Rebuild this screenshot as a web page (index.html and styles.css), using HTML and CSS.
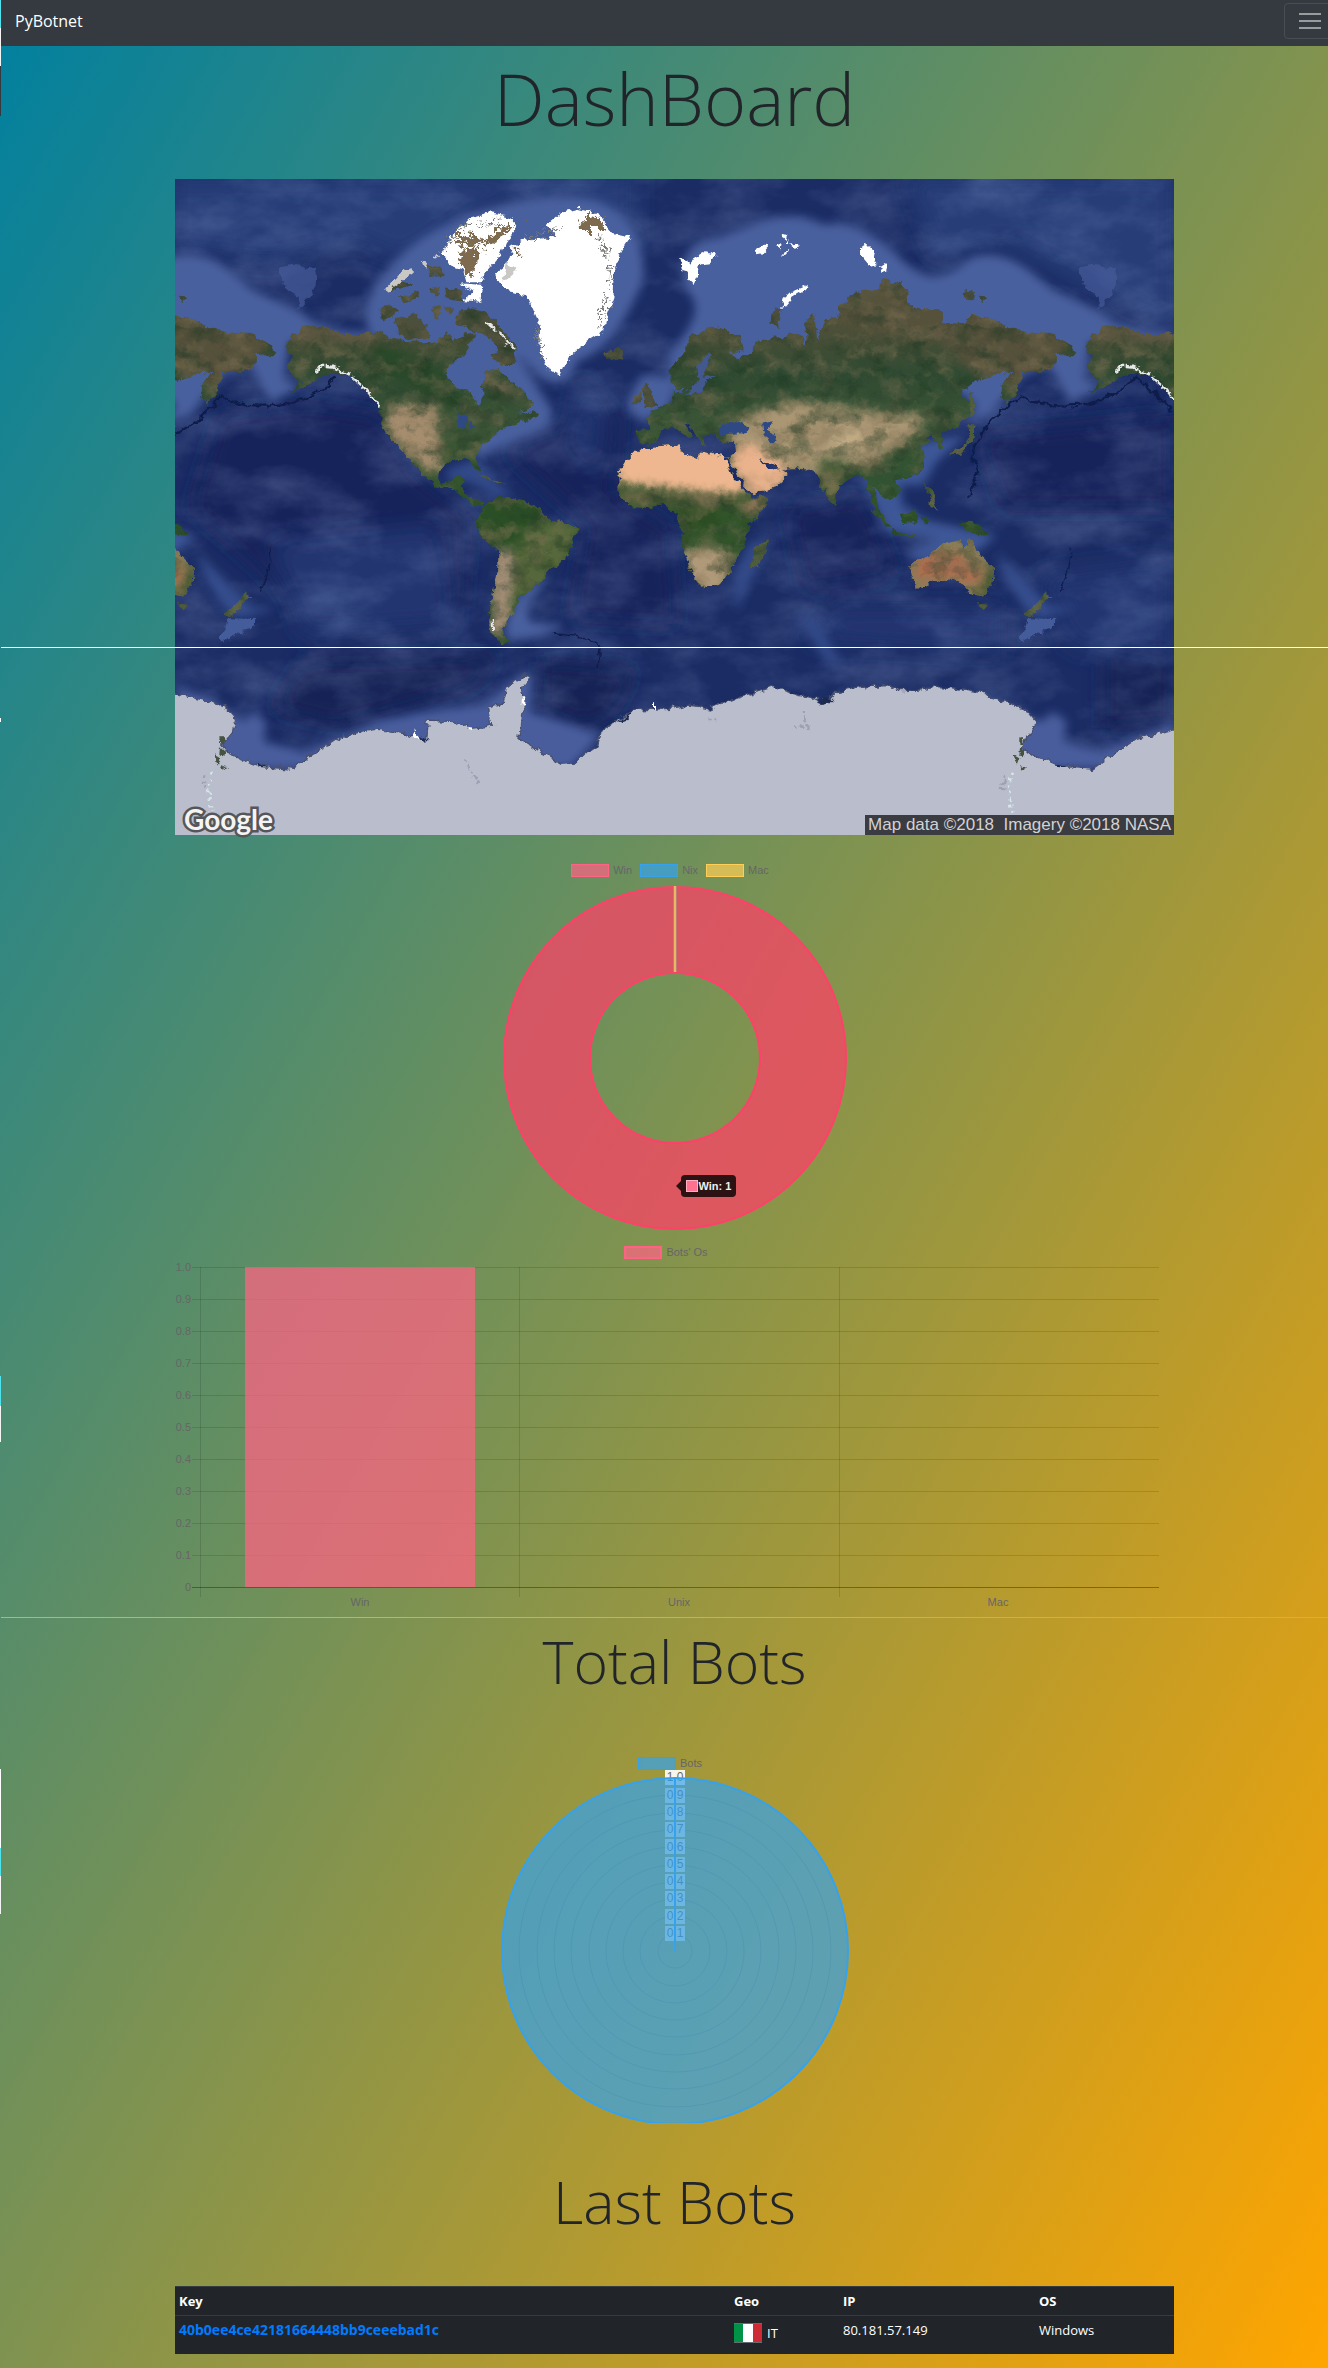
FILE: index.html
```html
<!DOCTYPE html>
<html lang="en">
<head>
<meta charset="utf-8">
<meta name="viewport" content="width=device-width, initial-scale=1">
<title>PyBotnet</title>
<link rel="stylesheet" href="styles.css">
</head>
<body>
<nav class="navbar">
  <a class="brand" href="#">PyBotnet</a>
  <button class="toggler" type="button" aria-label="Toggle navigation"><span></span><span></span><span></span></button>
</nav>
<main>
  <h1 class="title">DashBoard</h1>

  <section class="map-row">
    <div class="map">
      <svg class="map-art" viewBox="15 12 2997 1968" preserveAspectRatio="none" role="img" aria-label="World map">
        <defs>
          <filter id="soft" x="-10%" y="-10%" width="120%" height="120%"><feGaussianBlur stdDeviation="14"/></filter>
          <filter id="softer" x="-20%" y="-20%" width="140%" height="140%"><feGaussianBlur stdDeviation="34"/></filter>
          <filter id="coast" x="-2%" y="-2%" width="104%" height="104%">
            <feTurbulence type="fractalNoise" baseFrequency="0.04" numOctaves="4" seed="4" result="n"/>
            <feDisplacementMap in="SourceGraphic" in2="n" scale="26" xChannelSelector="R" yChannelSelector="G" result="d"/>
            <feGaussianBlur in="d" stdDeviation="1"/>
          </filter>
          <filter id="snow" x="-5%" y="-5%" width="110%" height="110%">
            <feTurbulence type="fractalNoise" baseFrequency="0.06" numOctaves="3" seed="12" result="n"/>
            <feDisplacementMap in="SourceGraphic" in2="n" scale="60" xChannelSelector="R" yChannelSelector="G"/>
          </filter>
          <filter id="grain" x="0" y="0" width="100%" height="100%">
            <feTurbulence type="fractalNoise" baseFrequency="0.005 0.009" numOctaves="6" seed="9"/>
            <feColorMatrix values="0 0 0 0 .28  0 0 0 0 .38  0 0 0 0 .66  1.3 0 0 0 -.5"/>
          </filter>
          <filter id="rock" x="0" y="0" width="100%" height="100%" color-interpolation-filters="sRGB">
            <feTurbulence type="fractalNoise" baseFrequency="0.014 0.02" numOctaves="5" seed="21" result="n"/>
            <feColorMatrix in="n" values="0 0 0 0 .5  0 0 0 0 .44  0 0 0 0 .33  1.5 0 0 0 -.68" result="c"/>
            <feColorMatrix in="n" values="0 0 0 0 .12  0 0 0 0 .22  0 0 0 0 .14  0 1.5 0 0 -.68" result="k"/>
            <feComposite in="c" in2="SourceGraphic" operator="in" result="t"/>
            <feComposite in="k" in2="SourceGraphic" operator="in" result="u"/>
            <feMerge><feMergeNode in="SourceGraphic"/><feMergeNode in="t"/><feMergeNode in="u"/></feMerge>
          </filter>
          <linearGradient id="land" x1="0" y1="330" x2="0" y2="1420" gradientUnits="userSpaceOnUse">
            <stop offset="0" stop-color="#5c5640"/><stop offset=".12" stop-color="#4e5038"/>
            <stop offset=".25" stop-color="#2f4b32"/><stop offset=".4" stop-color="#3d5637"/>
            <stop offset=".62" stop-color="#2f5228"/><stop offset=".78" stop-color="#5d6742"/>
            <stop offset="1" stop-color="#726d50"/>
          </linearGradient>
          <path id="namerica" d="M350 500L400 455 450 452 520 475 560 482 620 470 680 492 740 500 800 504 830 470 850 500 880 480 915 470 900 510 870 550 835 580 830 605 860 640 900 650 925 692 940 680 935 640 945 590 990 580 1010 610 1050 640 1085 680 1080 700 1050 712 1100 715 1090 732 1040 745 1000 765 960 790 940 815 915 850 932 885 920 888 900 857 860 855 830 865 810 880 800 910 820 925 850 920 862 905 882 910 875 937 890 960 915 975 945 978 930 992 910 990 880 965 840 940 790 930 755 900 720 850 690 820 650 780 632 740 632 700 590 650 550 605 500 590 450 610 400 640 350 655 400 622 360 600 350 570 372 545 350 530Z"/>
          <path id="samerica" d="M940 990L990 965 1060 975 1110 1000 1140 1035 1190 1045 1226 1062 1215 1085 1195 1130 1185 1155 1145 1180 1110 1220 1090 1245 1045 1270 1030 1310 1005 1340 1000 1375 1022 1407 990 1405 962 1375 955 1320 972 1250 985 1180 985 1130 950 1100 920 1060 930 1010Z"/>
          <path id="eurasia" d="M1502 625L1500 590 1540 530 1560 490 1600 462 1650 455 1700 480 1722 510 1720 532 1685 527 1700 552 1745 530 1760 500 1810 490 1885 475 1912 510 1905 450 1930 410 1942 490 1960 430 2000 430 2010 390 2060 350 2120 340 2140 315 2205 332 2215 350 2215 395 2280 405 2312 405 2325 445 2390 440 2405 420 2460 430 2520 460 2570 478 2640 470 2680 500 2722 530 2700 547 2660 535 2655 570 2610 597 2560 590 2542 640 2510 690 2493 660 2500 615 2530 590 2440 605 2390 640 2370 655 2402 695 2390 730 2350 760 2310 775 2325 820 2308 828 2290 780 2268 785 2282 800 2250 812 2265 850 2255 890 2220 910 2175 915 2190 945 2165 978 2140 965 2108 930 2122 990 2152 1045 2130 1030 2098 960 2080 900 2050 905 2010 930 1992 990 1970 970 1940 900 1920 885 1880 880 1830 880 1790 860 1770 848 1800 885 1835 878 1856 900 1820 935 1745 955 1700 900 1672 850 1698 830 1695 802 1650 798 1640 780 1600 785 1608 812 1590 805 1560 750 1540 742 1570 782 1555 795 1530 770 1505 750 1470 765 1460 795 1440 808 1405 803 1396 765 1445 762 1430 728 1460 700 1500 685 1512 650 1530 655 1545 635 1525 645Z"/>
          <path id="africa" d="M1345 900L1370 860 1410 820 1450 815 1530 808 1532 830 1580 852 1600 835 1665 848 1690 905 1740 965 1798 965 1780 1000 1740 1050 1728 1085 1722 1118 1700 1150 1690 1180 1650 1230 1590 1242 1570 1200 1550 1150 1535 1110 1545 1080 1520 1020 1480 990 1440 1000 1390 997 1345 960Z"/>
          <path id="australia" d="M2220 1165L2270 1145 2310 1110 2370 1095 2380 1125 2400 1090 2430 1140 2475 1180 2470 1225 2440 1265 2400 1257 2370 1222 2310 1212 2240 1240 2225 1200Z"/>
          <clipPath id="in-na"><use href="#namerica"/></clipPath>
          <clipPath id="in-sa"><use href="#samerica"/></clipPath>
          <clipPath id="in-ea"><use href="#eurasia"/></clipPath>
          <clipPath id="in-af"><use href="#africa"/></clipPath>
          <clipPath id="in-au"><use href="#australia"/></clipPath>
          <g id="shelf">
            <path fill="#4a609f" filter="url(#soft)" d="M600 480C560 380 640 280 740 200C880 100 1100 50 1250 70C1400 100 1440 240 1410 340C1370 420 1330 520 1220 560C1160 700 1080 560 1040 540L1150 710 1130 760 960 830 930 850 700 560Z"/>
            <path fill="#4a609f" filter="url(#soft)" d="M1500 540C1560 460 1600 400 1560 360C1520 300 1540 190 1640 190C1740 150 1860 90 1960 150C2060 130 2140 200 2200 260C2280 340 2340 300 2400 250C2480 220 2560 260 2640 340C2720 380 2760 390 2830 440C2920 480 2980 470 3012 470L2990 500 2760 500 2740 610 2790 640 2700 680 2640 570 2560 600 2460 720 2390 740 2420 690 2370 655 1500 660Z"/>
            <path fill="#4a609f" filter="url(#soft)" d="M1380 660L1420 600 1520 610 1500 700 1420 740 1370 700Z"/>
            <path fill="#3e5797" filter="url(#soft)" d="M2250 800L2320 790 2390 780 2300 860 2260 930 2190 930 2200 1000 2280 1040 2480 1080 2420 1130 2260 1160 2200 1140 2300 1090 2150 1070 2080 920Z"/>
            <path fill="#4a609f" filter="url(#soft)" d="M1060 1245L1140 1190 1070 1290 1080 1340 1190 1355 1100 1385 1010 1395 1010 1330Z"/>
            <path fill="#344d8d" filter="url(#soft)" d="M2480 1130L2550 1200 2640 1295 2720 1295 2620 1330 2570 1310 2510 1220Z"/>
            <path fill="#455c9b" filter="url(#coast)" d="M2575 1330L2665 1332 2640 1365 2600 1375 2560 1405 2552 1395Z"/>
            <path fill="#314a88" filter="url(#soft)" d="M830 885L920 850 990 930 1030 960 980 970 900 920 830 920ZM1690 1200L1740 1100 1800 1090 1760 1180 1700 1310ZM1880 1320L1940 1330 2020 1480 1960 1450Z"/>
            <path fill="#455a99" filter="url(#coast)" d="M2730 280Q2780 260 2800 280Q2850 270 2835 330Q2815 380 2785 405Q2790 350 2730 320Z" opacity=".7"/>
          </g>
          <g id="whites" fill="#fff">
            <path d="M1060 195L1120 190 1160 178 1130 150 1180 110 1225 98 1280 112 1300 140 1330 175 1382 185 1352 230 1335 285 1330 370 1305 435 1300 470 1250 500 1200 540 1180 575 1170 604 1135 585 1108 530 1110 450 1088 400 1070 357 1000 347 975 295 1015 265 1025 215Z"/>
            <path d="M815 235L850 180 900 130 960 115 1020 125 1045 155 1010 195 990 245 950 290 930 322 890 322 880 285 850 275ZM870 325L940 330 930 380 880 375 910 352ZM1530 250L1545 255 1555 275 1575 245 1600 228 1640 240 1620 262 1590 265 1585 300 1570 330 1555 315 1560 290 1540 285ZM1830 402L1838 375 1865 350 1912 330 1905 345 1870 365 1845 395ZM2070 220L2090 205 2108 225 2105 245 2122 270 2105 275 2070 235ZM2130 275L2145 265 2158 285 2135 292Z"/>
            <path d="M1760 222L1780 212 1797 214 1780 232 1765 235ZM1815 212L1838 204 1835 220ZM1840 188L1855 178 1850 198ZM1862 212L1890 208 1875 222ZM1832 236L1858 224 1850 236ZM1845 205L1862 196 1858 212Z"/>
            <path d="M1010 265L1040 290 1000 320ZM640 350L700 285 725 280 725 298 660 345ZM795 235L805 250 790 245ZM755 262L772 258 765 290Z" fill="#c9c8c4"/>
          </g>
          <g id="world">
            <g filter="url(#coast)">
              <g filter="url(#rock)">
              <g fill="#4b4f3a">
                <path d="M860 405L900 400 940 410 980 440 1010 480 1040 520 1030 570 990 570 960 545 985 520 950 480 900 465 860 445ZM675 430L740 420 772 450 780 485 720 492 680 470ZM625 400L660 388 690 410 640 442ZM645 345L690 318 730 330 690 345ZM690 365L745 350 750 370 700 382ZM765 265L800 275 825 300 780 303ZM775 340L810 335 800 362ZM825 340L880 350 878 380 830 372ZM790 395L808 395 805 435 790 425ZM820 395L850 400 840 420Z"/>
                <path d="M1305 530L1350 518 1363 545 1330 562 1312 548ZM1415 640L1435 617 1442 660 1467 690 1425 700ZM1393 660L1412 652 1410 685 1390 688ZM1800 445L1815 400 1832 402 1825 455ZM2375 355L2410 345 2415 370 2385 378ZM2430 365L2455 368 2435 378Z"/>
                <path d="M2340 835L2385 812 2398 780 2395 750 2420 752 2412 795 2370 840ZM2400 650L2412 655 2408 725 2398 725ZM2265 920L2285 950 2300 1005 2285 1000ZM1745 1175L1752 1122 1792 1092 1775 1165 1760 1180ZM2420 1278L2452 1285 2440 1305ZM2628 1248L2645 1265 2612 1292 2580 1327 2563 1320 2600 1285ZM1085 712L1105 715 1100 728 1078 725ZM920 895L990 920 1005 928 960 915Z" fill="#4f5d3c"/>
                <path d="M2365 1042L2420 1045 2465 1082 2430 1078 2385 1065ZM2185 1018L2243 1002 2240 1042 2200 1050ZM2105 1000L2165 1062 2145 1055ZM2165 1068L2230 1080 2225 1086 2165 1075ZM2255 1025L2280 1030 2262 1055Z" fill="#2d5128"/>
              </g>
              <use href="#namerica" fill="url(#land)"/><use href="#samerica" fill="#2c5026"/><use href="#eurasia" fill="url(#land)"/><use href="#africa" fill="#32542c"/><use href="#australia" fill="#8a7c56"/>
              <g clip-path="url(#in-na)"><g filter="url(#soft)">
                <path fill="#a58d6e" d="M640 720L700 680 800 690 810 780 815 900 760 880 660 790Z"/>
                <path fill="#5f5943" d="M350 455H620V500H360ZM870 560H960V620H1000L1080 690 960 640Z"/>
                <path fill="#2c4a2c" d="M620 500L780 560 900 680 840 700 690 620 600 600Z"/>
              </g></g>
              <g clip-path="url(#in-sa)"><g filter="url(#soft)">
                <path fill="#57673b" d="M1090 1040L1230 1040 1190 1160 1090 1260 1020 1260 1030 1140Z"/>
                <path fill="#a8917a" d="M970 1120L1025 1120 1030 1190 1020 1330 990 1400 960 1380Z"/>
              </g></g>
              <g clip-path="url(#in-ea)"><g filter="url(#soft)">
                <path fill="#55513b" d="M2000 420L2200 330 2700 480 2650 600 2520 640 2400 590 2300 480 2100 470Z"/>
                <path fill="#aa9673" d="M1650 790L1740 720 1850 680 1980 690 2100 710 2260 720 2240 780 2150 830 2100 870 1960 850 1930 900 1800 870Z"/>
                <path fill="#c9b38b" d="M1970 790L2040 770 2090 780 2050 805 1990 810Z"/>
                <path fill="#eab38d" d="M1680 850L1740 810 1860 890 1820 940 1740 960Z"/>
                <path fill="#76704e" d="M1930 880L2010 890 2010 960 1980 980Z"/>
                <path fill="#335333" d="M2060 880L2250 800 2260 900 2170 970 2100 940Z"/>
              </g></g>
              <g clip-path="url(#in-af)"><g filter="url(#soft)">
                <path fill="#626440" d="M1340 950L1500 955 1700 950 1710 985 1340 990Z"/>
                <path fill="#a37c5e" d="M1700 1000L1800 950 1770 1020Z"/>
                <path fill="#b09978" d="M1520 1120L1640 1120 1700 1150 1650 1260 1560 1240Z"/>
                <path fill="#2a4d24" d="M1520 1005L1650 1000 1640 1050 1540 1060Z"/>
              </g></g>
              <g clip-path="url(#in-au)"><g filter="url(#soft)">
                <path fill="#b06d50" d="M2235 1150L2320 1135 2380 1140 2400 1180 2430 1180 2420 1230 2340 1205 2240 1215Z"/>
                <path fill="#42562f" d="M2455 1160L2490 1170 2480 1260 2420 1270Z"/>
              </g></g>
              </g>
              <g clip-path="url(#in-af)"><path filter="url(#soft)" fill="#efb78f" d="M1330 920L1360 780 1700 780 1730 955 1600 950 1480 938Z"/></g>
              <g clip-path="url(#in-ea)"><path filter="url(#soft)" fill="#eab38d" opacity=".8" d="M1670 840L1720 805 1860 890 1820 945 1740 970Z"/></g>
              <path fill="#42598f" d="M1575 580L1600 545 1622 535 1612 570 1600 605 1640 602 1612 615 1600 650 1540 660 1562 640 1590 612Z"/>
              <path fill="#2f4a84" d="M1645 757L1690 737 1735 755 1730 775 1650 777ZM1775 740L1808 733 1800 765 1822 802 1790 802 1780 770ZM865 720L890 722 880 765 870 750ZM895 740L918 750 905 765Z"/>
              <use href="#whites"/>
              <path fill="#7d6b4f" filter="url(#snow)" d="M1225 150L1270 120 1305 150 1290 165 1230 165ZM1030 225L1050 220 1055 240 1030 240ZM940 200L1010 150 1040 150 960 215ZM860 185L900 175 940 200 910 215 870 205ZM860 225L930 220 910 300 890 305Z"/>
              <path fill="none" stroke="#7a7b78" stroke-width="10" stroke-dasharray="8 7" filter="url(#snow)" d="M1065 185L1160 165M1290 180L1320 270 1310 370 1285 450M1100 450L1118 550M820 240L855 180 900 140M920 150L990 140"/>
              <path fill="none" stroke="#e8e8e8" stroke-width="7" stroke-dasharray="40 4" d="M435 598L450 572 490 575 540 600 590 645 630 695M950 440L990 475 1035 525"/>
              <path fill="none" stroke="#e8e8e8" stroke-width="6" d="M968 1330L969 1365"/>
            </g>
          </g>
        </defs>
        <rect x="15" y="12" width="2997" height="1968" fill="#1b2c64"/>
        <g filter="url(#softer)">
          <path fill="#263c78" d="M0 0H1400V200L1000 60 700 260 550 200 300 260 0 220ZM2200 0H3020V470L2500 200 2300 250Z"/>
          <path fill="#14235a" d="M150 720L400 690 620 720 740 900 900 1020 880 1300 400 1300 60 1000ZM1000 820L1350 700 1330 950 1500 1060 1520 1350 1200 1330 1250 1050ZM2420 780L3010 720V1000L2500 1000ZM1850 1000L2080 960 2180 1200 1900 1240Z"/>
          <path fill="#203571" d="M1230 600L1300 700 1280 900 1200 780ZM300 1100L800 1050 850 1350 400 1380ZM2000 1300L2500 1300 2500 1430 1900 1400ZM2600 1200L3010 1150V1450L2700 1420Z"/>
          <path fill="#152454" d="M400 1460L1000 1440 900 1540 500 1650 300 1600ZM1110 1460L1400 1480 1330 1610 1250 1660 1110 1600ZM2800 1460H3010V1640L2800 1660Z"/>
        </g>
        <rect x="15" y="12" width="2997" height="1968" filter="url(#grain)" opacity=".4"/>
        <use href="#shelf"/><use href="#shelf" x="-2400"/>
        <path fill="#485d9d" filter="url(#soft)" d="M15 1535L120 1570 220 1640 250 1610 290 1640 280 1700 400 1730 620 1640 760 1610 940 1590 1060 1490 1090 1500 1080 1610 1180 1640 1290 1680 1200 1780H100ZM2415 1550L2610 1640 2650 1610 2690 1640 2680 1700 2800 1730 3012 1640V1780H2500Z"/>
        <path fill="none" stroke="#101c4b" stroke-width="7" filter="url(#coast)" d="M15 780Q90 740 150 665Q250 710 380 680Q450 655 500 605M2400 960Q2440 890 2405 850Q2420 760 2550 665Q2650 710 2780 680Q2850 655 2900 605L3012 710"/>
        <path fill="none" stroke="#101c4b" stroke-width="4" filter="url(#coast)" d="M300 1120Q310 1160 270 1250M2700 1120Q2710 1160 2670 1250M1150 1375L1260 1390Q1310 1430 1280 1475"/>
        <use href="#world"/><use href="#world" x="-2400"/><use href="#world" x="2400"/>
        <path fill="#babdcb" stroke="#47506f" stroke-width="4" filter="url(#coast)" d="M-20 1550L100 1575 170 1600 200 1635 190 1670 155 1710 180 1740 260 1770 370 1780 440 1730 500 1690 610 1660 700 1675 770 1690 775 1635 850 1640 910 1660 970 1650 955 1600 1000 1580 1010 1540 1060 1500 1082 1505 1055 1540 1060 1600 1050 1690 1120 1735 1170 1765 1220 1760 1280 1715 1290 1670 1340 1635 1400 1605 1500 1600 1560 1590 1620 1602 1700 1570 1810 1535 1870 1555 1930 1570 1965 1588 2000 1550 2090 1535 2150 1532 2190 1547 2250 1545 2310 1535 2360 1540 2430 1550 2500 1580 2570 1605 2600 1640 2570 1690 2555 1715 2590 1740 2660 1770 2770 1780 2840 1730 2900 1690 3060 1655V2020H-20Z"/>
        <g filter="url(#coast)">
          <path fill="#1c2a50" d="M258 1765L300 1778 260 1776ZM750 1680L780 1695 760 1697ZM1340 1640L1390 1610 1370 1635ZM1950 1575L1990 1570 1968 1592ZM2655 1765L2705 1778 2660 1776Z"/>
          <path fill="#45523f" d="M148 1690h14v14h-14zM150 1715l16 10-4 22-14-6zM130 1740l18 10-8 22zM150 1770l22 6-14 8zM2548 1690h14v14h-14zM2550 1715l16 10-4 22-14-6zM2530 1740l18 10-8 22zM2550 1770l22 6-14 8z"/>
          <path fill="none" stroke="#d5e8ec" stroke-width="7" stroke-dasharray="9 11" d="M125 1790L115 1850 125 1910M2525 1790L2515 1850 2528 1915"/>
          <path fill="none" stroke="#9da1b4" stroke-width="8" stroke-dasharray="10 8" d="M105 1800L100 1850M2505 1800L2498 1850M1905 1605L1908 1665M1870 1655H1920M1612 1635H1645M882 1755L925 1825"/>
          <path fill="#fff" d="M730 1660L750 1690 735 1688ZM895 1652L912 1655 905 1668ZM1055 1570h8v15h-8zM1452 1585h6v20h-6z"/>
        </g>
      </svg>
      <span class="map-logo">Google</span>
      <span class="map-credit">Map data ©2018  Imagery ©2018 NASA</span>
    </div>
    <hr class="map-rule">
  </section>

  <section class="chart donut">
    <ul class="legend">
      <li><i class="swatch red"></i>Win</li>
      <li><i class="swatch blue"></i>Nix</li>
      <li><i class="swatch yellow"></i>Mac</li>
    </ul>
    <div class="ring">
      <svg width="346" height="346" viewBox="0 0 346 346">
        <circle cx="173" cy="173" r="128" fill="none" stroke="#ff4066" stroke-opacity=".72" stroke-width="86"/>
        <circle cx="173" cy="173" r="171" fill="none" stroke="#ff4069" stroke-width="2"/>
        <circle cx="173" cy="173" r="85" fill="none" stroke="#ff4069" stroke-width="2"/>
        <path d="M173 1V87" stroke="#c07a72" stroke-width="4"/><path d="M173 1V87" stroke="#eab765" stroke-width="2"/>
      </svg>
      <div class="tooltip"><i></i>Win: 1</div>
    </div>
  </section>

  <section class="chart bars">
    <ul class="legend"><li><i class="swatch red thick"></i>Bots' Os</li></ul>
    <svg class="bar-art" viewBox="0 0 999 348">
      <path class="grid" d="M17 8.500H984M17 40.500H984M17 72.500H984M17 104.500H984M17 136.500H984M17 168.500H984M17 200.500H984M17 232.500H984M17 264.500H984M17 296.500H984M344.500 8V338M664.500 8V338M25.500 328V338"/>
      <path class="grid" d="M25.500 8V328"/>
      <path class="axis" d="M17 328.500H984"/>
      <rect x="70" y="8" width="230" height="320" fill="#ff6384" fill-opacity=".73"/>
      <g class="ticks" text-anchor="end">
        <text x="16" y="12">1.0</text><text x="16" y="44">0.9</text><text x="16" y="76">0.8</text><text x="16" y="108">0.7</text><text x="16" y="140">0.6</text><text x="16" y="172">0.5</text><text x="16" y="204">0.4</text><text x="16" y="236">0.3</text><text x="16" y="268">0.2</text><text x="16" y="300">0.1</text><text x="16" y="332">0</text>
      </g>
      <g class="ticks" text-anchor="middle">
        <text x="185" y="347">Win</text><text x="504" y="347">Unix</text><text x="823" y="347">Mac</text>
      </g>
    </svg>
  </section>
  <hr class="rule">

  <h2 class="title">Total Bots</h2>
  <section class="chart polar">
    <ul class="legend"><li><i class="swatch blue"></i>Bots</li></ul>
    <svg width="348" height="353" viewBox="0 0 348 353">
      <g fill="none" stroke="#000" stroke-opacity=".16">
        <circle cx="174" cy="181" r="17"/><circle cx="174" cy="181" r="35"/><circle cx="174" cy="181" r="52"/><circle cx="174" cy="181" r="69"/><circle cx="174" cy="181" r="86"/><circle cx="174" cy="181" r="104"/><circle cx="174" cy="181" r="121"/><circle cx="174" cy="181" r="138"/><circle cx="174" cy="181" r="156"/>
      </g>
      <path fill="#fff" fill-opacity=".9" d="M164 0h20v15h-20z"/>
      <path fill="#fff" fill-opacity=".75" d="M164 18h20v15h-20zM164 35h20v15h-20zM164 52h20v15h-20zM164 69h20v15h-20zM164 87h20v15h-20zM164 104h20v15h-20zM164 121h20v15h-20zM164 139h20v15h-20zM164 156h20v15h-20z"/>
      <g class="scale" text-anchor="middle">
        <text x="174" y="11">1.0</text><text x="174" y="29">0.9</text><text x="174" y="46">0.8</text><text x="174" y="63">0.7</text><text x="174" y="81">0.6</text><text x="174" y="98">0.5</text><text x="174" y="115">0.4</text><text x="174" y="132">0.3</text><text x="174" y="150">0.2</text><text x="174" y="167">0.1</text>
      </g>
      <circle cx="174" cy="181" r="173" fill="#36a2eb" fill-opacity=".7" stroke="#36a2eb" stroke-width="2"/>
      <path d="M174 8V181" stroke="#36a2eb" stroke-width="2"/>
    </svg>
  </section>

  <h2 class="title">Last Bots</h2>
  <div class="table-wrap">
    <table class="bots">
      <thead><tr><th class="c-key">Key</th><th class="c-geo">Geo</th><th class="c-ip">IP</th><th>OS</th></tr></thead>
      <tbody><tr>
        <td><a href="#">40b0ee4ce42181664448bb9ceeebad1c</a></td>
        <td><span class="geo"><i class="flag"></i>IT</span></td>
        <td>80.181.57.149</td><td>Windows</td>
      </tr></tbody>
    </table>
  </div>
</main>
</body>
</html>
```
FILE: styles.css
```css
* { box-sizing: border-box; }

body {
  margin: 0;
  color: #212529;
  font-family: "Open Sans", "Noto Sans", sans-serif;
  font-size: 13px;
  line-height: 20px;
  background:
    linear-gradient(to bottom, #4fe3ee 28px, #f4f4f4 28px 66px, #343a40 66px 116px, transparent 116px 718px, #fff 718px 722px, transparent 722px 1376px, #4fe3ee 1376px 1406px, #f4f4f4 1406px 1442px, transparent 1442px 1769px, #fff 1769px 1848px, #4fe3ee 1848px 1876px, #f4f4f4 1876px 1914px, transparent 1914px) 0 0 / 1px 100% no-repeat,
    linear-gradient(to bottom right, #0080a0, #ffa500);
}

.navbar {
  display: flex;
  align-items: center;
  justify-content: space-between;
  height: 46px;
  margin-left: 1px;
  padding-left: 14px;
  overflow: hidden;
  background: #343a40;
}
.brand { color: #fff; font-size: 16px; text-decoration: none; margin-bottom: 4px; }
.toggler {
  display: flex;
  flex-direction: column;
  align-items: center;
  justify-content: center;
  gap: 5px;
  width: 52px;
  height: 36px;
  margin-right: -8px;
  margin-bottom: 4px;
  padding: 0;
  background: none;
  border: 1px solid #484e54;
  border-radius: 4px;
}
.toggler span { width: 22px; height: 2px; background: #999c9f; }

main { margin-left: 1px; padding: 0 154px 15px 174px; }

.title { margin: 0; text-align: center; font-weight: 300; }
h1.title { font-size: 72px; line-height: 104px; padding-bottom: 29px; }
h2.title { font-size: 59px; line-height: 87px; padding-bottom: 4px; }

/* Map */
.map-row, .rule { margin-left: -174px; margin-right: -154px; }
.map-row { position: relative; padding: 0 154px 0 174px; }
.map { position: relative; }
.map-art { display: block; width: 100%; height: auto; aspect-ratio: 999 / 656; }
.map-logo {
  position: absolute;
  left: 9px;
  bottom: 4px;
  color: #f4f4f4;
  font: 700 28px/24px Lato, sans-serif;
  -webkit-text-stroke: 5px #55565a;
  paint-order: stroke fill;
}
.map-credit {
  position: absolute;
  right: 0;
  bottom: 0;
  padding: 0 3px;
  color: #d2d2d6;
  background: rgba(45, 45, 50, .9);
  font: 17px/20px "Liberation Sans", Arial, sans-serif;
  white-space: pre;
}
.map-rule {
  position: absolute;
  inset: 468px 0 auto;
  height: 1px;
  margin: 0;
  border: 0;
  background: #fff;
}

/* Charts */
.chart { display: flex; flex-direction: column; align-items: center; }
.donut { padding-top: 29px; }
.legend {
  display: flex;
  gap: 8px;
  margin: 0 9px 0 0;
  padding: 0;
  list-style: none;
  color: #666;
  font: 11px/13px "Liberation Sans", Arial, sans-serif;
}
.legend li { display: flex; gap: 4px; }
.swatch { width: 38px; height: 13px; border: 1px solid; }
.red { background: rgba(255, 99, 132, .7); border-color: #ff6384; }
.red.thick { border-width: 2px; }
.blue { background: rgba(54, 162, 235, .7); border-color: #36a2eb; }
.yellow { background: rgba(255, 206, 86, .7); border-color: #ffce56; }
.ring { position: relative; margin-top: 8px; height: 345px; }
.ring svg { display: block; }
.tooltip {
  position: absolute;
  left: 179px;
  top: 290px;
  display: flex;
  align-items: center;
  gap: 1px;
  height: 22px;
  padding: 0 5px;
  color: #eee;
  background: #2c1213;
  border-radius: 4px;
  font: 700 11px/20px "Liberation Sans", Arial, sans-serif;
  white-space: nowrap;
}
.tooltip::before {
  content: "";
  position: absolute;
  left: -5px;
  top: 6px;
  border: 5px solid transparent;
  border-left: 0;
  border-right-color: #2c1213;
}
.tooltip i { width: 12px; height: 12px; background: #ff7190; border: 1px solid #ffb1c1; }

.bars { padding-top: 16px; }
.bars .legend { margin-right: 17px; }
.bar-art { display: block; width: 100%; height: auto; }
.grid { stroke: #000; stroke-opacity: .12; fill: none; }
.axis { stroke: #000; stroke-opacity: .34; fill: none; }
.ticks, .scale { fill: #666; font: 11px "Liberation Sans", Arial, sans-serif; }
.scale { font-size: 12px; }
.rule { height: 1px; margin-top: 10px; margin-bottom: 0; border: 0; background: #b5ae9c; }

.polar { padding-top: 48px; padding-bottom: 35px; }
.polar svg { display: block; }

/* Table */
.table-wrap { padding-top: 37px; }
.bots { width: 100%; table-layout: fixed; border-collapse: collapse; color: #fff; background: #212529; }
.bots th, .bots td { padding: 4px; text-align: left; vertical-align: top; border-top: 1px solid #343b41; }
.bots td { height: 38px; }
.bots a { color: #007bff; font-size: 14px; font-weight: 700; text-decoration: none; }
.c-key { width: 555px; }
.c-geo { width: 109px; }
.c-ip { width: 196px; }
.geo { display: flex; align-items: center; gap: 5px; padding-top: 3px; }
.flag { width: 28px; height: 20px; background: linear-gradient(to right, #009246 33%, #fff 33% 67%, #ce2b37 67%); border: solid #666d70; border-width: 1px 0; }
```
